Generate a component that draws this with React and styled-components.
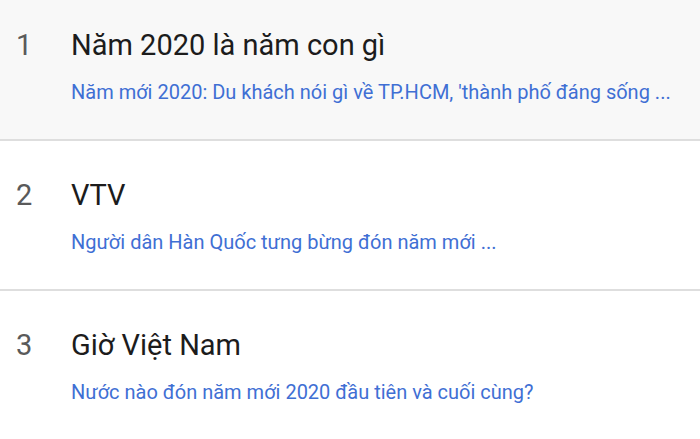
import React from "react";
import styled, { createGlobalStyle } from "styled-components";

const Global = createGlobalStyle`
  html, body { margin: 0; padding: 0; background: #ffffff; }
  body { font-family: Roboto, "Noto Sans", Arial, sans-serif; overflow: hidden; }
`;

const List = styled.ol`
  list-style: none;
  margin: -9px 0 0 0;
  padding: 0;
  width: 700px;
`;

const Row = styled.li`
  display: grid;
  grid-template-columns: 55px 1fr;
  height: 150px;
  box-sizing: border-box;
  padding: 37px 0 0 16px;
  background: ${(p) => (p.$active ? "#f8f8f8" : "#ffffff")};
  border-bottom: 2px solid #dedede;
`;

const Rank = styled.span`
  font-size: 29px;
  line-height: 34px;
  color: #5a5a5a;
`;

const Body = styled.div`
  display: flex;
  flex-direction: column;
  gap: 18px;
  min-width: 0;
`;

const Title = styled.div`
  font-size: 29px;
  line-height: 34px;
  color: #1c1c1c;
`;

const Snippet = styled.a`
  font-size: 20px;
  line-height: 24px;
  color: #3f6fd4;
  text-decoration: none;
  white-space: nowrap;
`;

const items = [
  {
    title: "Năm 2020 là năm con gì",
    snippet: "Năm mới 2020: Du khách nói gì về TP.HCM, 'thành phố đáng sống ...",
  },
  { title: "VTV", snippet: "Người dân Hàn Quốc tưng bừng đón năm mới ..." },
  {
    title: "Giờ Việt Nam",
    snippet: "Nước nào đón năm mới 2020 đầu tiên và cuối cùng?",
  },
];

export default function App() {
  return (
    <>
      <Global />
      <List>
        {items.map((it, i) => (
          <Row key={i} $active={i === 0}>
            <Rank>{i + 1}</Rank>
            <Body>
              <Title>{it.title}</Title>
              <Snippet href="#">{it.snippet}</Snippet>
            </Body>
          </Row>
        ))}
      </List>
    </>
  );
}
